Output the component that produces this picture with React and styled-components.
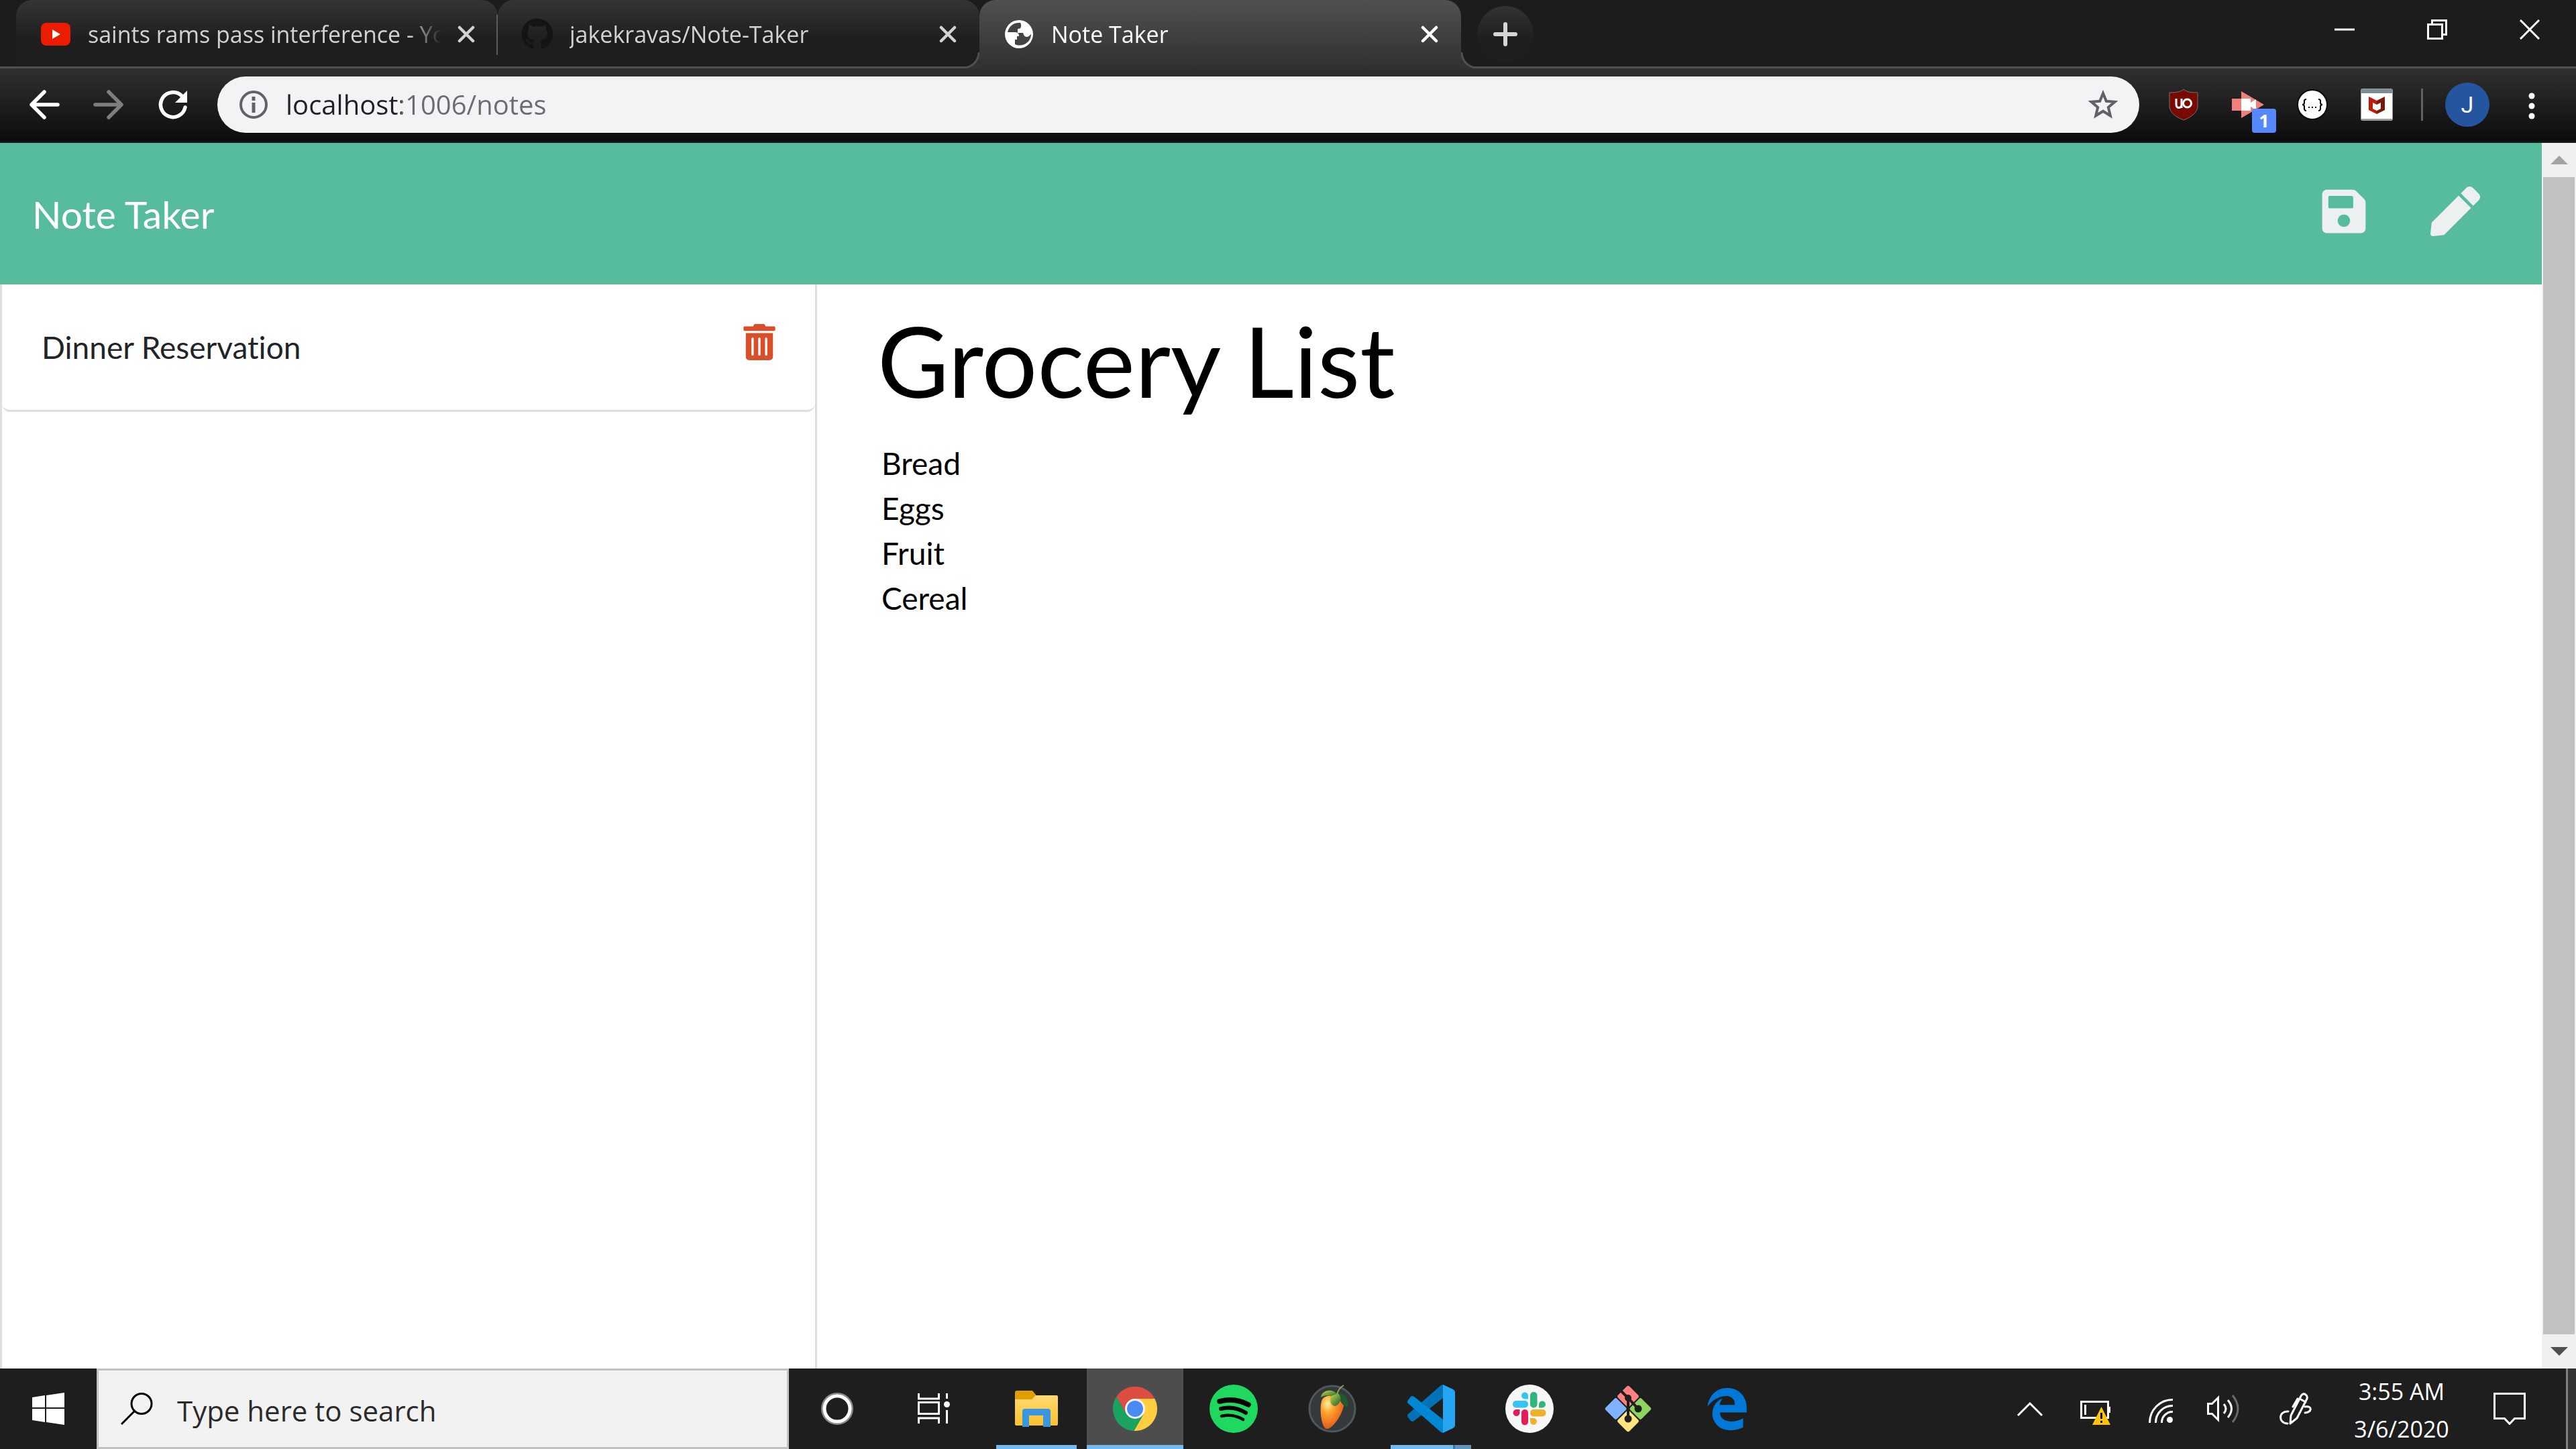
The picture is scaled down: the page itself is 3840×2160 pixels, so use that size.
import React, { useState } from "react";
import styled, { createGlobalStyle, css } from "styled-components";
import { FaSave, FaPen, FaTrashAlt, FaGithub, FaEdgeLegacy } from "react-icons/fa";

const uiFont = '"Segoe UI", "Open Sans", "Noto Sans", sans-serif';
const pageFont = 'Lato, "Liberation Sans", sans-serif';

const GlobalStyle = createGlobalStyle`
  *, *::before, *::after { box-sizing: border-box; }
  body { margin: 0; background: #ffffff; }
  button { border: 0; padding: 0; margin: 0; background: none; color: inherit; font: inherit; cursor: pointer; }
  input, textarea { border: 0; margin: 0; outline: 0; border-radius: 0; }
  svg { display: block; }
`;

const Desktop = styled.div`
  display: flex;
  flex-direction: column;
  min-height: 100vh;
  font-family: ${uiFont};
`;

/* ---------- browser frame ---------- */

const TabStrip = styled.div`
  display: flex;
  height: 102px;
  padding-left: 24px;
  background: #1c1c1c;
  border-bottom: 3px solid #505050;
`;

const TabBox = styled.div`
  position: relative;
  display: flex;
  align-items: center;
  gap: 24px;
  flex: 0 1 718px;
  min-width: 0;
  height: 99px;
  padding: 3px 34px 0 35px;
  border-radius: 24px 24px 0 0;
  color: #d2d2d2;
  background: linear-gradient(#343434, #1e1e1e 60%);

  ${(p) =>
    p.$divided &&
    css`
      &::after {
        content: "";
        position: absolute;
        right: -1px;
        top: 22px;
        width: 3px;
        height: 60px;
        background: #5c5c5c;
      }
    `}

  ${(p) =>
    p.$active &&
    css`
      height: 102px;
      padding-top: 0;
      color: #ffffff;
      background: linear-gradient(#505050, #303030);
      z-index: 1;
      &::before,
      &::after {
        content: "";
        position: absolute;
        bottom: 0;
        width: 24px;
        height: 24px;
      }
      &::before {
        left: -24px;
        background: radial-gradient(circle at 0 0, transparent 21px, #505050 22px, #505050 24px, #323232 25px);
      }
      &::after {
        right: -24px;
        background: radial-gradient(circle at 100% 0, transparent 21px, #505050 22px, #505050 24px, #323232 25px);
      }
    `}
`;

const TabTitle = styled.span`
  flex: 1;
  min-width: 0;
  overflow: hidden;
  white-space: nowrap;
  font-size: 34px;
  line-height: 48px;
  mask-image: linear-gradient(to left, transparent, #000 48px);
`;

const NewTabButton = styled.button`
  display: grid;
  place-items: center;
  flex: none;
  width: 84px;
  height: 84px;
  margin: 9px 0 0 24px;
  border-radius: 50%;
  background: linear-gradient(#333333, #1e1e1e 60%);
`;

const WindowControls = styled.div`
  display: flex;
  margin-left: auto;
`;

const WindowButton = styled.button`
  display: grid;
  place-items: center;
  width: 138px;
  height: 87px;
`;

const Toolbar = styled.div`
  display: flex;
  align-items: center;
  height: 111px;
  padding: 12px 24px 15px;
  gap: 24px;
  background: linear-gradient(#303030, #0c0c0c 97%, #161616 98%);
`;

const ToolGroup = styled.div`
  display: flex;
  gap: 12px;
`;

const ToolButton = styled.button`
  position: relative;
  display: grid;
  place-items: center;
  width: 84px;
  height: 84px;
`;

const Badge = styled.span`
  position: absolute;
  right: 0;
  bottom: 0;
  width: 36px;
  height: 36px;
  border-radius: 4px;
  background: #5688ff;
  color: #ffffff;
  font: 700 27px/36px ${uiFont};
  text-align: center;
`;

const Separator = styled.span`
  width: 3px;
  height: 48px;
  background: #626262;
`;

const Avatar = styled.span`
  width: 66px;
  height: 66px;
  border-radius: 50%;
  background: #26559f;
  color: #ffffff;
  font: 400 34px/66px Roboto, sans-serif;
  text-align: center;
`;

const Omnibox = styled.label`
  display: flex;
  align-items: center;
  gap: 24px;
  flex: 1;
  height: 84px;
  padding: 0 30px;
  border-radius: 42px;
  background: #f1f3f4;
`;

const AddressInput = styled.input`
  flex: 1;
  min-width: 0;
  height: 60px;
  padding: 0;
  font: 400 40px/60px ${uiFont};
  color: #202124;
  -webkit-text-fill-color: transparent;
  background: linear-gradient(90deg, #202124 172px, #6a6d70 172px);
  background-clip: text;
`;

/* ---------- web page ---------- */

const Viewport = styled.div`
  display: flex;
  flex: 1;
  min-height: 0;
`;

const Page = styled.div`
  display: flex;
  flex-direction: column;
  flex: 1;
  min-width: 0;
  background: #ffffff;
  font-family: ${pageFont};
  font-variant-ligatures: none;
`;

const Navbar = styled.header`
  display: flex;
  align-items: center;
  justify-content: space-between;
  min-height: 211px;
  padding: 0 92px 0 48px;
  background: #57bb9e;
  color: #ecf0f1;
`;

const Brand = styled.a`
  color: #ffffff;
  font-size: 57px;
  line-height: 84px;
  text-decoration: none;
`;

const NavActions = styled.div`
  display: flex;
  align-items: center;
  gap: 92px;
  padding-bottom: 8px;
`;

const NavButton = styled.button`
  svg {
    width: auto;
    height: 74px;
  }
`;

const Columns = styled.main`
  display: flex;
  flex: 1;
`;

const SideColumn = styled.div`
  display: flex;
  flex: 0 0 33.3333%;
  padding-right: 45px;
`;

const NoteList = styled.ul`
  flex: 1;
  margin: 0;
  padding: 0;
  list-style: none;
  border: solid #dfdfdf;
  border-width: 0 3px;
`;

const NoteItem = styled.li`
  display: flex;
  align-items: center;
  justify-content: space-between;
  height: 190px;
  padding: 0 56px 0 59px;
  border-bottom: 3px solid #dfdfdf;
  border-radius: 0 0 12px 12px;
  color: #212529;
  font-size: 46px;
  line-height: 67px;
`;

const DeleteButton = styled.button`
  padding-bottom: 15px;
  color: #d84f2b;
  svg {
    width: auto;
    height: 54px;
  }
`;

const Editor = styled.form`
  display: flex;
  flex-direction: column;
  flex: 1;
  gap: 34px;
  padding: 26px 45px 45px;
`;

const TitleInput = styled.input`
  width: 100%;
  height: 173px;
  padding: 0;
  color: #000000;
  font: 400 146px/173px ${pageFont};
`;

const BodyInput = styled.textarea`
  flex: 1;
  width: 100%;
  padding: 0 6px;
  resize: none;
  background: transparent;
  color: #000000;
  font: 400 46px/67px ${pageFont};
`;

const ScrollTrack = styled.div`
  display: flex;
  flex-direction: column;
  width: 51px;
  background: #f0f0f0;
`;

const ScrollArrow = styled.button`
  display: grid;
  place-items: center;
  height: 51px;
  color: ${(p) => p.$color};
`;

const ScrollThumb = styled.div`
  flex: 1;
  margin: 0 2px;
  background: #c1c1c1;
`;

/* ---------- taskbar ---------- */

const Taskbar = styled.footer`
  display: flex;
  height: 120px;
  background: #1e1e1e;
  color: #ffffff;
`;

const TaskButton = styled.button`
  display: grid;
  place-items: center;
  width: 144px;
`;

const SearchBox = styled.label`
  display: flex;
  align-items: center;
  gap: 36px;
  flex: 0 1 1032px;
  padding: 0 33px;
  border: 3px solid #c2c2c2;
  background: #f2f2f2;
`;

const SearchInput = styled.input`
  flex: 1;
  min-width: 0;
  height: 66px;
  padding: 4px 0 0;
  background: transparent;
  font: 400 42px/60px ${uiFont};
  &::placeholder {
    color: #2b2b2b;
    opacity: 1;
  }
`;

const PinnedApps = styled.div`
  display: flex;
  gap: 3px;
  margin-left: 9px;
`;

const AppButton = styled.button`
  position: relative;
  display: grid;
  place-items: center;
  width: 144px;
  height: 120px;
  background: ${(p) => (p.$focused ? "#4d4d4d" : "transparent")};

  ${(p) =>
    p.$open &&
    css`
      &::after {
        content: "";
        position: absolute;
        left: ${p.$focused ? 0 : 12}px;
        right: ${p.$focused ? 0 : 12}px;
        bottom: 0;
        height: 6px;
        background: ${p.$stacked
          ? "linear-gradient(90deg, #76b9ed 93px, #4b7595 93px, #4b7595 96px, #6093bd 96px)"
          : "#76b9ed"};
      }
    `}
`;

const Tray = styled.div`
  display: flex;
  margin-left: auto;
`;

const TrayButton = styled.button`
  display: grid;
  place-items: center;
  width: ${(p) => p.$width || 96}px;
`;

const Clock = styled.button`
  width: 196px;
  padding-top: 4px;
  font-size: 34px;
  line-height: 56px;
  text-align: center;
`;

const ShowDesktop = styled.button`
  width: 15px;
  margin-left: 21px;
  border-left: 3px solid #808080;
  background: #333333;
`;

/* ---------- icons ---------- */

const Svg = ({ w = 48, h = w, children }) => (
  <svg width={w} height={h} viewBox={`0 0 ${w} ${h}`} fill="none" aria-hidden="true">
    {children}
  </svg>
);

const CloseIcon = () => (
  <Svg w={26}>
    <path d="M3 3 23 23M23 3 3 23" stroke="currentColor" strokeWidth="4.5" strokeLinecap="round" />
  </Svg>
);

const YoutubeIcon = () => (
  <Svg>
    <rect x="2" y="7" width="44" height="34" rx="8" fill="#eb1c00" />
    <path d="M19 17 31 24 19 31Z" fill="#fff" />
  </Svg>
);

const GlobeIcon = () => (
  <Svg>
    <circle cx="24" cy="24" r="21" fill="#fff" />
    <path
      d="M26 7C16 6 9 12 7 21h11c4 0 6 2 6 6h-3v5h-3v7c11 5 24-3 24-15-2 1-3 4-6 4-4 0-5-3-6-6h-8v-6c3 0 5-1 5-4V9z"
      fill="#444"
    />
  </Svg>
);

const BackIcon = () => (
  <Svg>
    <path d="M44 24H6M24 5 5 24l19 19" stroke="#fff" strokeWidth="5.5" strokeLinecap="round" strokeLinejoin="round" />
  </Svg>
);

const ForwardIcon = () => (
  <Svg>
    <path d="M4 24h38M24 5l19 19-19 19" stroke="#7e7e7e" strokeWidth="5.5" strokeLinecap="round" strokeLinejoin="round" />
  </Svg>
);

const ReloadIcon = () => (
  <Svg>
    <path d="M42 28A18.500 18.500 0 1 1 37 11" stroke="#fff" strokeWidth="5.5" strokeLinecap="round" />
    <path d="M45 3v18H27z" fill="#fff" />
  </Svg>
);

const InfoIcon = () => (
  <Svg>
    <circle cx="24" cy="24" r="19" stroke="#5f6368" strokeWidth="4" />
    <path d="M24 21v15M24 12v6" stroke="#5f6368" strokeWidth="5" />
  </Svg>
);

const StarIcon = () => (
  <Svg>
    <path
      d="M24 7l4.800 11.800 12.700 1-9.700 8.200 3 12.400L24 33.700l-10.800 6.700 3-12.400-9.700-8.200 12.700-1z"
      stroke="#5f6368"
      strokeWidth="4"
    />
  </Svg>
);

const ShieldIcon = () => (
  <Svg>
    <path d="M24 1c4 4 11 5 21 5v20c0 9-8 16-21 21C11 42 3 35 3 26V6c10 0 17-1 21-5z" fill="#780a02" stroke="#77706f" />
    <path d="M13 15v9c0 6 8 6 8 0v-9M21 24v5" stroke="#fff" strokeWidth="3" />
    <circle cx="29.500" cy="22" r="6" stroke="#fff" strokeWidth="3" />
  </Svg>
);

const CameraArrowIcon = () => (
  <Svg>
    <path d="M0 15h14v18H0z" fill="#f0807c" />
    <path d="M14 4l34 20-34 20z" fill="#f0807c" />
    <path d="M14 15h14v6l8-5v16l-8-5v6H14z" fill="#fff" />
  </Svg>
);

const BracesIcon = () => (
  <Svg>
    <circle cx="24" cy="24" r="22" fill="#fff" stroke="#0a0a0a" strokeWidth="2" />
    <path
      d="M15 16c-4 0-3 3-3 5s-1 3-3 3c2 0 3 1 3 3s-1 6 3 6M33 16c4 0 3 3 3 5s1 3 3 3c-2 0-3 1-3 3s1 6-3 6"
      stroke="#000"
      strokeWidth="2"
    />
    <path d="M18 27h2v2h-2zM23 27h2v2h-2zM28 27h2v2h-2z" fill="#000" />
  </Svg>
);

const McAfeeIcon = () => (
  <Svg>
    <rect width="48" height="48" rx="3" fill="#9c9ca1" />
    <path d="M1 7h46v38H1z" fill="#fff" />
    <path d="M1 1h46v6H1z" fill="#7c8d97" />
    <path d="M12 12l12 6v6l-6-3v9l6 3v5l-12-6z" fill="#c01a08" />
    <path d="M36 12l-12 6v6l6-3v9l-6 3v5l12-6z" fill="#7e1708" />
  </Svg>
);

const DotsIcon = () => (
  <Svg>
    <circle cx="24" cy="11" r="4.500" fill="#fff" />
    <circle cx="24" cy="26" r="4.500" fill="#fff" />
    <circle cx="24" cy="41" r="4.500" fill="#fff" />
  </Svg>
);

const WindowsIcon = () => (
  <Svg>
    <path d="M0 7l19-3v18H0zM21 4l27-4v22H21zM0 24h19v20L0 41zM21 24h27v24l-27-4z" fill="#fff" />
  </Svg>
);

const MagnifierIcon = () => (
  <Svg>
    <circle cx="31" cy="16.500" r="15" stroke="#000" strokeWidth="3" />
    <path d="M20 28 1 47" stroke="#000" strokeWidth="3" />
  </Svg>
);

const CortanaIcon = () => (
  <Svg>
    <circle cx="24" cy="24" r="22.500" stroke="#8a8a8a" strokeWidth="3" />
    <circle cx="24" cy="24" r="19" stroke="#fff" strokeWidth="5" />
  </Svg>
);

const TaskViewIcon = () => (
  <Svg>
    <path
      d="M1.500 1v8h30V1M1.500 46v-8h30v8M1.500 14.500h30v17h-30zM43.500 1v8M43.500 26v20"
      stroke="#fff"
      strokeWidth="3"
    />
    <circle cx="43.500" cy="17.500" r="4.500" fill="#fff" />
  </Svg>
);

const FolderIcon = () => (
  <Svg w={64} h={54}>
    <defs>
      <linearGradient id="folder" x1="0" y1="0" x2="0" y2="1">
        <stop offset="0" stopColor="#ffdb73" />
        <stop offset="1" stopColor="#fbc02d" />
      </linearGradient>
    </defs>
    <path d="M3 0h23l5 6v8H0V3q0-3 3-3z" fill="#e09f00" />
    <path d="M0 13h25l6-6h31q2 0 2 2v41q0 2-2 2H2q-2 0-2-2z" fill="url(#folder)" />
    <path d="M11 54V31q0-4 4-4h34q4 0 4 4v23H42V37H21v17z" fill="#3b97dd" />
  </Svg>
);

const ChromeIcon = () => (
  <Svg w={66}>
    <path d="M62.400 18A33 33 0 0 1 31.300 66L46 40.500 33 18z" fill="#ffcd40" />
    <path d="M31.300 66A33 33 0 0 1 5.300 15L20 40.500H46z" fill="#1aa260" />
    <path d="M5.300 15A33 33 0 0 1 62.400 18H33L20 40.500z" fill="#dd4e41" />
    <circle cx="33" cy="33" r="15" fill="#f4f4f4" />
    <circle cx="33" cy="33" r="12" fill="#4a8af4" />
  </Svg>
);

const SpotifyIcon = () => (
  <Svg w={72}>
    <circle cx="36" cy="36" r="36" fill="#1ed85f" />
    <g stroke="#000" strokeLinecap="round">
      <path d="M15 25q23-6 43 5" strokeWidth="7.500" />
      <path d="M17 36q19-5 37 6" strokeWidth="6" />
      <path d="M18 47q17-4 32 5" strokeWidth="4.500" />
    </g>
  </Svg>
);

const FruitIcon = () => (
  <Svg w={72}>
    <defs>
      <radialGradient id="fruit" cx="0.3" cy="0.25" r="0.8">
        <stop offset="0" stopColor="#fff0a0" />
        <stop offset="0.35" stopColor="#fda52c" />
        <stop offset="1" stopColor="#e2511a" />
      </radialGradient>
      <linearGradient id="leaf" x1="0" y1="0" x2="1" y2="1">
        <stop offset="0" stopColor="#c0dc50" />
        <stop offset="1" stopColor="#1d5a2c" />
      </linearGradient>
    </defs>
    <circle cx="36" cy="36" r="34" fill="#34393c" stroke="#50575c" strokeWidth="3" />
    <path d="M21 22C28 13 50 14 53 27 55 38 38 66 28 66 19 66 16 32 21 22z" fill="url(#fruit)" />
    <path d="M48 13c8 1 13 10 11 21-7-2-11-8-13-15z" fill="#1f5a30" />
    <path d="M19 19C20 9 35 4 44 15l-8 3c-6-3-12-2-17 1z" fill="url(#leaf)" />
    <path d="M34 17l11-4c5 6 5 14-4 19-8 0-9-8-7-15z" fill="url(#leaf)" />
    <path d="M43 14Q46 5 53 1" stroke="#8fa45a" strokeWidth="2" />
  </Svg>
);

const CodeIcon = () => (
  <Svg w={72}>
    <path d="M54 0 51 1 2 44q-2 2 0 5l4 5q2 2 5 0L54 20z" fill="#0072b8" />
    <path d="M2 28q-2-2 0-5l4-5q2-2 5 0l43 34v20l-3-1z" fill="#0087d4" />
    <path d="M54 0l15 7q3 2 3 4v50q0 2-3 4l-15 7z" fill="#26a6f2" />
  </Svg>
);

const SlackIcon = () => (
  <Svg w={72}>
    <circle cx="36" cy="36" r="36" fill="#f7f7f7" />
    <path d="M34 21.500h-5a5 5 0 1 1 5-5z" fill="#36c5f0" />
    <rect x="11" y="24" width="23" height="10.500" rx="5" fill="#36c5f0" />
    <rect x="37" y="11" width="10.500" height="23.500" rx="5" fill="#2eb67d" />
    <path d="M50 34.500v-5a5 5 0 1 1 5 5z" fill="#2eb67d" />
    <path d="M21.500 37v5.500a5 5 0 1 1-5-5.500z" fill="#e01e5a" />
    <rect x="24" y="37" width="10" height="23.500" rx="5" fill="#e01e5a" />
    <rect x="37" y="37" width="23.500" height="10.500" rx="5" fill="#ecb22e" />
    <path d="M37 50h5.500a5 5 0 1 1-5.500 5z" fill="#ecb22e" />
  </Svg>
);

const GitIcon = () => (
  <Svg w={72}>
    <g transform="rotate(45 36 36)">
      <rect x="11" y="11" width="24" height="24" rx="3" fill="#ff8080" />
      <rect x="37" y="11" width="24" height="24" rx="3" fill="#8cd35f" />
      <rect x="11" y="37" width="24" height="24" rx="3" fill="#80b3ff" />
      <rect x="37" y="37" width="24" height="24" rx="3" fill="#ffe680" />
    </g>
    <path d="M23 7l13 13v31M36 20l15 16" stroke="#1e1e1e" strokeWidth="4" />
    <circle cx="36" cy="20" r="5" fill="#1e1e1e" />
    <circle cx="36" cy="51" r="5.500" fill="#1e1e1e" />
    <circle cx="51" cy="36" r="5.500" fill="#1e1e1e" />
  </Svg>
);

const ChevronUpIcon = () => (
  <Svg>
    <path d="M6 34 24 16l18 18" stroke="#fff" strokeWidth="3" />
  </Svg>
);

const BatteryIcon = () => (
  <Svg>
    <path d="M4.500 13.500h40v24h-40zM10.500 18v15" stroke="#fff" strokeWidth="3" />
    <path d="M45 21h3v9h-3z" fill="#fff" />
    <path d="M34.500 21 48 48H21z" fill="#ffc20e" />
    <path d="M33 30h3v9h-3zM33 42h3v3h-3z" fill="#000" />
  </Svg>
);

const WifiIcon = () => (
  <Svg>
    <path d="M10.500 45A34 34 0 0 1 45 10.500M19.500 45A25 25 0 0 1 45 19.500M28.500 45A16 16 0 0 1 45 28.500" stroke="#fff" strokeWidth="3" />
    <circle cx="40.500" cy="40.500" r="4.500" fill="#fff" />
  </Svg>
);

const VolumeIcon = () => (
  <Svg>
    <path d="M1.500 16.500h6l9-9v33l-9-9h-6z" stroke="#fff" strokeWidth="3" />
    <path d="M25 17q6 7 0 14M31 11q11 13 0 26" stroke="#fff" strokeWidth="3" />
    <path d="M38 4q16 20 0 40" stroke="#6a6a6a" strokeWidth="3" />
  </Svg>
);

const PenIcon = () => (
  <Svg>
    <path
      d="M16 46 17 34 32 5q3-5 7-2 3 2 2 6L26 38zM27 9l-7 12M13 28C-2 27-2 46 12 46M38 21c12-2 10 9 0 9M30 9l9 5"
      stroke="#fff"
      strokeWidth="3"
      strokeLinecap="round"
      strokeLinejoin="round"
    />
  </Svg>
);

const NotificationIcon = () => (
  <Svg>
    <path d="M1.500 1.500h45v37h-15l-7.500 8-7.500-8h-15z" stroke="#fff" strokeWidth="3" />
  </Svg>
);

const tabs = [
  { title: "saints rams pass interference - YouTube", icon: <YoutubeIcon />, divided: true },
  { title: "jakekravas/Note-Taker", icon: <FaGithub size={48} color="#141414" /> },
  { title: "Note Taker", icon: <GlobeIcon />, active: true },
];

const apps = [
  { name: "File Explorer", icon: <FolderIcon />, open: true },
  { name: "Google Chrome", icon: <ChromeIcon />, open: true, focused: true },
  { name: "Spotify", icon: <SpotifyIcon /> },
  { name: "FL Studio", icon: <FruitIcon /> },
  { name: "Visual Studio Code", icon: <CodeIcon />, open: true, stacked: true },
  { name: "Slack", icon: <SlackIcon /> },
  { name: "Git Bash", icon: <GitIcon /> },
  { name: "Microsoft Edge", icon: <FaEdgeLegacy size={65} color="#0078d7" /> },
];

export default function App() {
  const [title, setTitle] = useState("Grocery List");
  const [body, setBody] = useState("Bread\nEggs\nFruit\nCereal");
  const [address, setAddress] = useState("localhost:1006/notes");

  return (
    <Desktop>
      <GlobalStyle />
      <TabStrip>
        {tabs.map((tab) => (
          <TabBox key={tab.title} $active={tab.active} $divided={tab.divided}>
            {tab.icon}
            <TabTitle>{tab.title}</TabTitle>
            <button type="button" aria-label="Close tab">
              <CloseIcon />
            </button>
          </TabBox>
        ))}
        <NewTabButton type="button" aria-label="New tab">
          <Svg w={36}>
            <path d="M3 18h30M18 3v30" stroke="#d5d5d8" strokeWidth="6" strokeLinecap="round" />
          </Svg>
        </NewTabButton>
        <WindowControls>
          <WindowButton type="button" aria-label="Minimize">
            <Svg w={30}>
              <path d="M0 15h30" stroke="#fff" strokeWidth="3" />
            </Svg>
          </WindowButton>
          <WindowButton type="button" aria-label="Restore">
            <Svg w={30}>
              <path d="M1.500 7.500h21v21h-21zM7.500 7V1.500h21v21H23" stroke="#fff" strokeWidth="3" />
            </Svg>
          </WindowButton>
          <WindowButton type="button" aria-label="Close">
            <Svg w={30}>
              <path d="M1 1l28 28M29 1 1 29" stroke="#fff" strokeWidth="3" />
            </Svg>
          </WindowButton>
        </WindowControls>
      </TabStrip>

      <Toolbar>
        <ToolGroup>
          <ToolButton type="button" aria-label="Back"><BackIcon /></ToolButton>
          <ToolButton type="button" aria-label="Forward"><ForwardIcon /></ToolButton>
          <ToolButton type="button" aria-label="Reload"><ReloadIcon /></ToolButton>
        </ToolGroup>
        <Omnibox>
          <InfoIcon />
          <AddressInput
            aria-label="Address"
            value={address}
            spellCheck={false}
            onChange={(e) => setAddress(e.target.value)}
          />
          <StarIcon />
        </Omnibox>
        <ToolGroup>
          <ToolButton type="button" aria-label="uBlock Origin"><ShieldIcon /></ToolButton>
          <ToolButton type="button" aria-label="Screen recorder">
            <CameraArrowIcon />
            <Badge>1</Badge>
          </ToolButton>
          <ToolButton type="button" aria-label="JSON viewer"><BracesIcon /></ToolButton>
          <ToolButton type="button" aria-label="McAfee"><McAfeeIcon /></ToolButton>
        </ToolGroup>
        <Separator />
        <ToolGroup>
          <ToolButton type="button" aria-label="Profile"><Avatar>J</Avatar></ToolButton>
          <ToolButton type="button" aria-label="Menu"><DotsIcon /></ToolButton>
        </ToolGroup>
      </Toolbar>

      <Viewport>
        <Page>
          <Navbar>
            <Brand href="#home">Note Taker</Brand>
            <NavActions>
              <NavButton type="button" aria-label="Save note"><FaSave /></NavButton>
              <NavButton type="button" aria-label="New note"><FaPen /></NavButton>
            </NavActions>
          </Navbar>
          <Columns>
            <SideColumn>
              <NoteList>
                <NoteItem>
                  <span>Dinner Reservation</span>
                  <DeleteButton type="button" aria-label="Delete note"><FaTrashAlt /></DeleteButton>
                </NoteItem>
              </NoteList>
            </SideColumn>
            <Editor>
              <TitleInput
                aria-label="Note title"
                value={title}
                spellCheck={false}
                onChange={(e) => setTitle(e.target.value)}
              />
              <BodyInput
                aria-label="Note text"
                value={body}
                spellCheck={false}
                onChange={(e) => setBody(e.target.value)}
              />
            </Editor>
          </Columns>
        </Page>
        <ScrollTrack>
          <ScrollArrow type="button" aria-label="Scroll up" $color="#a3a3a3">
            <Svg w={26} h={13}><path d="M13 0l13 13H0z" fill="currentColor" /></Svg>
          </ScrollArrow>
          <ScrollThumb />
          <ScrollArrow type="button" aria-label="Scroll down" $color="#505050">
            <Svg w={26} h={13}><path d="M13 13 0 0h26z" fill="currentColor" /></Svg>
          </ScrollArrow>
        </ScrollTrack>
      </Viewport>

      <Taskbar>
        <TaskButton type="button" aria-label="Start"><WindowsIcon /></TaskButton>
        <SearchBox>
          <MagnifierIcon />
          <SearchInput aria-label="Search" placeholder="Type here to search" />
        </SearchBox>
        <TaskButton type="button" aria-label="Cortana"><CortanaIcon /></TaskButton>
        <TaskButton type="button" aria-label="Task view"><TaskViewIcon /></TaskButton>
        <PinnedApps>
          {apps.map((app) => (
            <AppButton
              key={app.name}
              type="button"
              aria-label={app.name}
              $open={app.open}
              $focused={app.focused}
              $stacked={app.stacked}
            >
              {app.icon}
            </AppButton>
          ))}
        </PinnedApps>
        <Tray>
          <TrayButton type="button" aria-label="Show hidden icons"><ChevronUpIcon /></TrayButton>
          <TrayButton type="button" aria-label="Battery"><BatteryIcon /></TrayButton>
          <TrayButton type="button" aria-label="Network"><WifiIcon /></TrayButton>
          <TrayButton type="button" aria-label="Volume"><VolumeIcon /></TrayButton>
          <TrayButton type="button" aria-label="Windows Ink" $width={120}><PenIcon /></TrayButton>
          <Clock type="button">
            3:55 AM
            <br />
            3/6/2020
          </Clock>
          <TrayButton type="button" aria-label="Notifications" $width={126}><NotificationIcon /></TrayButton>
          <ShowDesktop type="button" aria-label="Show desktop" />
        </Tray>
      </Taskbar>
    </Desktop>
  );
}
